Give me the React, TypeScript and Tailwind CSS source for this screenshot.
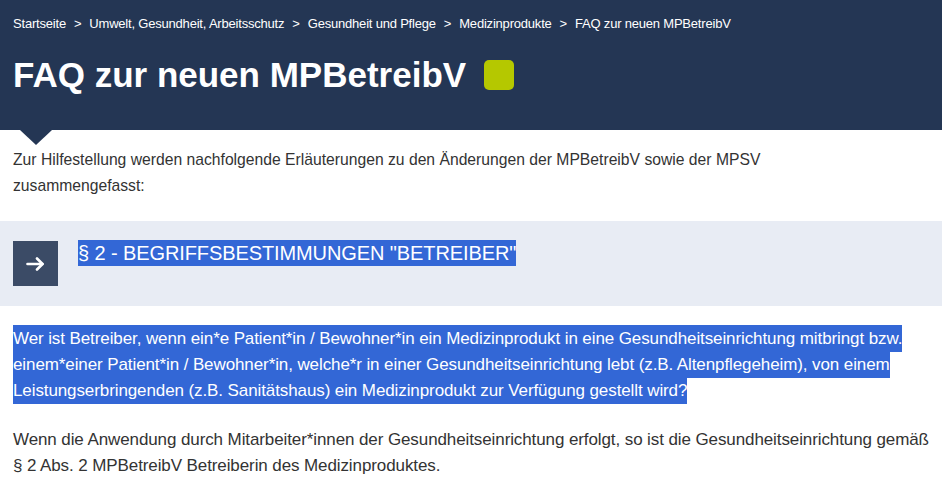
import React from "react";

export default function App() {
  const font = { fontFamily: '"Liberation Sans", Arial, sans-serif' };
  return (
    <div className="w-[942px] h-[477px] overflow-hidden bg-white text-[#333]" style={font}>
      <header className="relative h-[130px] bg-[#243654] px-[13px] pt-[15px]">
        <nav className="flex items-center gap-[8px] text-[13px] leading-[18px] text-white tracking-[-0.2px]">
          <span>Startseite</span>
          <span>&gt;</span>
          <span>Umwelt, Gesundheit, Arbeitsschutz</span>
          <span>&gt;</span>
          <span>Gesundheit und Pflege</span>
          <span>&gt;</span>
          <span>Medizinprodukte</span>
          <span>&gt;</span>
          <span>FAQ zur neuen MPBetreibV</span>
        </nav>
        <div className="mt-[22px] flex items-center gap-[18px]">
          <h1 className="text-[35px] leading-[40px] font-bold text-white">FAQ zur neuen MPBetreibV</h1>
          <div className="h-[30px] w-[30px] rounded-[5px] bg-[#b5c800]" />
        </div>
        <div className="absolute left-[20px] bottom-[-15px] h-0 w-0 border-l-[16px] border-r-[16px] border-t-[15px] border-l-transparent border-r-transparent border-t-[#243654]" />
      </header>

      <div className="w-[893px] pl-[13px]">
        <p className="pt-[17px] text-[15.7px] leading-[26px] text-[#333]">
          Zur Hilfestellung werden nachfolgende Erläuterungen zu den Änderungen der MPBetreibV sowie der MPSV zusammengefasst:
        </p>
      </div>

      <section className="mt-[22px] flex items-start gap-[20px] bg-[#e8ecf4] px-[13px] py-[20px]">
        <div className="flex h-[45px] w-[45px] shrink-0 items-center justify-center bg-[#3b4b66]">
          <svg width="19" height="14" viewBox="0 0 19 14" fill="none" stroke="white" strokeWidth="2.6" strokeLinecap="round" strokeLinejoin="round">
            <path d="M1.5 7h15" />
            <path d="M11 1.5l5.5 5.5-5.5 5.5" />
          </svg>
        </div>
        <h2 className="-mt-[1px] text-[20px] leading-[26px] uppercase tracking-[-0.1px]">
          <span className="bg-[#3367d6] py-[2px] text-white">§ 2 - Begriffsbestimmungen "Betreiber"</span>
        </h2>
      </section>

      <div className="w-[930px] pl-[13px]">
        <p className="mt-[20px] text-[17px] leading-[26px] tracking-[-0.1px]">
          <span className="bg-[#3367d6] py-[4px] text-white [box-decoration-break:clone]">
            Wer ist Betreiber, wenn ein*e Patient*in / Bewohner*in ein Medizinprodukt in eine Gesundheitseinrichtung mitbringt bzw. einem*einer Patient*in / Bewohner*in, welche*r in einer Gesundheitseinrichtung lebt (z.B. Altenpflegeheim), von einem Leistungserbringenden (z.B. Sanitätshaus) ein Medizinprodukt zur Verfügung gestellt wird?
          </span>
        </p>

        <p className="mt-[23px] text-[17px] leading-[26px] tracking-[-0.1px]">
          Wenn die Anwendung durch Mitarbeiter*innen der Gesundheitseinrichtung erfolgt, so ist die Gesundheitseinrichtung gemäß § 2 Abs. 2 MPBetreibV Betreiberin des Medizinproduktes.
        </p>
      </div>
    </div>
  );
}
